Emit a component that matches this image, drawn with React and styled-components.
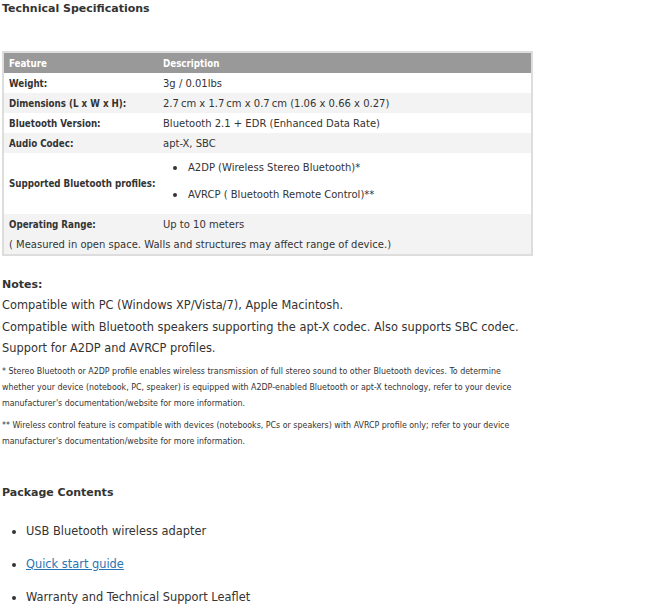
import React from "react";
import styled, { createGlobalStyle } from "styled-components";

const GlobalStyle = createGlobalStyle`
  html, body {
    margin: 0;
    padding: 0;
    background: #fff;
  }
  body {
    font-family: "DejaVu Sans", Verdana, sans-serif;
    color: #333;
  }
`;

const Page = styled.div`
  padding: 0 2px;
  width: 653px;
`;

const Heading = styled.h3`
  margin: 0 0 ${({ $gap }) => $gap || 0}px;
  padding-top: 2px;
  font-size: 11px;
  line-height: 14px;
  font-weight: bold;
  color: #333;
`;

const SpecTable = styled.table`
  margin-top: 35px;
  width: 531px;
  table-layout: fixed;
  border-collapse: collapse;
  border: 2px solid #ddd;
  font-size: 10px;
`;

const HeadCell = styled.th`
  background: #999;
  color: #fff;
  text-align: left;
  font-family: "DejaVu Sans Condensed", "DejaVu Sans", sans-serif;
  font-size: 9.7px;
  font-weight: bold;
  height: 20px;
  padding: 0 5px;
`;

const Row = styled.tr`
  background: ${({ $shade }) => ($shade ? "#f3f3f3" : "#fff")};
`;

const Label = styled.td`
  font-family: "DejaVu Sans Condensed", "DejaVu Sans", sans-serif;
  font-size: 9.7px;
  font-weight: bold;
  height: 20px;
  padding: 0 5px;
  white-space: nowrap;
`;

const Value = styled.td`
  height: 20px;
  padding: 0 5px;
`;

const NoteCell = styled.td`
  height: 20px;
  padding: 0 5px;
`;

const ProfileList = styled.ul`
  margin: 0;
  padding: 8px 0 12px 0;
  list-style: none;

  li {
    position: relative;
    line-height: 14px;
    padding-left: 25px;
  }

  li + li {
    margin-top: 13px;
  }

  li::before {
    content: "";
    position: absolute;
    left: 10px;
    top: 5px;
    width: 4px;
    height: 4px;
    border-radius: 50%;
    background: #333;
  }
`;

const Notes = styled.div`
  margin-top: 20px;
`;

const NoteLine = styled.p`
  margin: 0;
  font-size: 11.4px;
  line-height: 21.5px;
`;

const FootNote = styled.p`
  margin: 3px 0 0;
  font-family: "DejaVu Sans Condensed", "DejaVu Sans", sans-serif;
  font-size: 8.8px;
  line-height: 16px;
  white-space: nowrap;

  & + & {
    margin-top: 6px;
  }
`;

const Section = styled.div`
  margin-top: 35px;
`;

const Contents = styled.ul`
  margin: 24px 0 0;
  padding: 0 0 0 24px;
  font-size: 11.4px;

  li {
    line-height: 14px;
    margin-bottom: 19px;
  }
`;

const Link = styled.a`
  color: #2a74b4;
  text-decoration: underline;
`;

const specs = [
  ["Weight:", "3g / 0.01lbs"],
  ["Dimensions (L x W x H):", "2.7\u2009cm x 1.7\u2009cm x 0.7\u2009cm (1.06 x 0.66 x 0.27)"],
  ["Bluetooth Version:", "Bluetooth 2.1 + EDR (Enhanced Data Rate)"],
  ["Audio Codec:", "apt-X, SBC"],
];

export default function App() {
  return (
    <Page>
      <GlobalStyle />
      <Heading>Technical Specifications</Heading>
      <SpecTable>
        <colgroup>
          <col style={{ width: 155 }} />
          <col />
        </colgroup>
        <thead>
          <tr>
            <HeadCell>Feature</HeadCell>
            <HeadCell>Description</HeadCell>
          </tr>
        </thead>
        <tbody>
          {specs.map(([k, v], i) => (
            <Row key={k} $shade={i % 2 === 1}>
              <Label>{k}</Label>
              <Value>{v}</Value>
            </Row>
          ))}
          <Row>
            <Label>Supported Bluetooth profiles:</Label>
            <Value>
              <ProfileList>
                <li>A2DP (Wireless Stereo Bluetooth)*</li>
                <li>AVRCP ( Bluetooth Remote Control)**</li>
              </ProfileList>
            </Value>
          </Row>
          <Row $shade>
            <Label>Operating Range:</Label>
            <Value>Up to 10 meters</Value>
          </Row>
          <Row $shade>
            <NoteCell colSpan={2}>
              ( Measured in open space. Walls and structures may affect range of device.)
            </NoteCell>
          </Row>
        </tbody>
      </SpecTable>

      <Notes>
        <Heading $gap={3}>Notes:</Heading>
        <NoteLine>Compatible with PC (Windows XP/Vista/7), Apple Macintosh.</NoteLine>
        <NoteLine>Compatible with Bluetooth speakers supporting the apt-X codec. Also supports SBC codec.</NoteLine>
        <NoteLine>Support for A2DP and AVRCP profiles.</NoteLine>
        <FootNote>
          * Stereo Bluetooth or A2DP profile enables wireless transmission of full stereo sound to other Bluetooth devices. To determine
          <br />
          whether your device (notebook, PC, speaker) is equipped with A2DP-enabled Bluetooth or apt-X technology, refer to your device
          <br />
          manufacturer's documentation/website for more information.
        </FootNote>
        <FootNote>
          ** Wireless control feature is compatible with devices (notebooks, PCs or speakers) with AVRCP profile only; refer to your device
          <br />
          manufacturer's documentation/website for more information.
        </FootNote>
      </Notes>

      <Section>
        <Heading>Package Contents</Heading>
        <Contents>
          <li>USB Bluetooth wireless adapter</li>
          <li>
            <Link href="#">Quick start guide</Link>
          </li>
          <li>Warranty and Technical Support Leaflet</li>
        </Contents>
      </Section>
    </Page>
  );
}
